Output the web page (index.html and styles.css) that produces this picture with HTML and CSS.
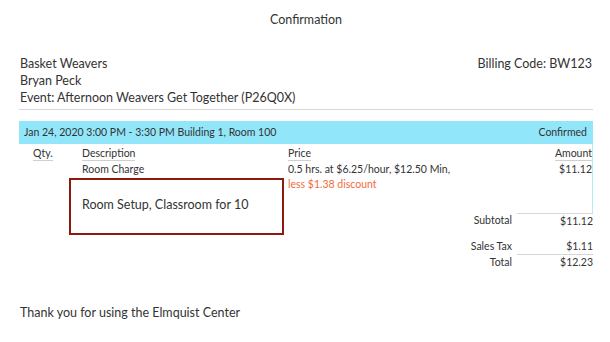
FILE: index.html
```html
<!DOCTYPE html>
<html lang="en">
<head>
    <meta charset="UTF-8">
    <meta name="viewport" content="width=device-width, initial-scale=1.0">
    <title>Confirmation</title>
    <link rel="stylesheet" href="styles.css">
</head>
<body>

<div class="page">
    <h1 class="title">Confirmation</h1>

    <div class="customer">
        <div class="customer-info">
            <div>Basket Weavers</div>
            <div>Bryan Peck</div>
            <div>Event: Afternoon Weavers Get Together (P26Q0X)</div>
        </div>
        <div class="billing">Billing Code: BW123</div>
    </div>

    <div class="booking-bar">
        <span>Jan 24, 2020 3:00 PM - 3:30 PM Building 1, Room 100</span>
        <span>Confirmed</span>
    </div>

    <div class="items">
        <div class="item-row head">
            <div class="col-qty"><span class="head-label">Qty.</span></div>
            <div><span class="head-label">Description</span></div>
            <div><span class="head-label">Price</span></div>
            <div class="col-amount"><span class="head-label">Amount</span></div>
        </div>
        <div class="item-row">
            <div class="col-qty"></div>
            <div>Room Charge</div>
            <div>
                0.5 hrs. at $6.25/hour, $12.50 Min,
                <div class="discount">less $1.38 discount</div>
            </div>
            <div class="col-amount">$11.12</div>
        </div>

        <!-- setup note for the room -->
        <div class="setup-note">Room Setup, Classroom for 10</div>
    </div>

    <div class="totals">
        <div class="total-label">Subtotal</div>
        <div class="total-value subtotal">$11.12</div>
        <div class="total-label tax">Sales Tax</div>
        <div class="total-value tax tax-value">$1.11</div>
        <div class="total-label">Total</div>
        <div class="total-value">$12.23</div>
    </div>

    <p class="thanks">Thank you for using the Elmquist Center</p>
</div>

</body>
</html>
```

FILE: styles.css
```css
body {
    margin: 0;
    font-family: Lato, "Open Sans", sans-serif;
    color: #333;
}
.page {
    padding: 0 17px 0 19px;
}
.title {
    margin: 0;
    padding-top: 11px;
    font-size: 12.5px;
    font-weight: normal;
    line-height: 17px;
    text-align: center;
}
.customer {
    display: flex;
    justify-content: space-between;
    margin-top: 27px;
    padding: 0 1px 3px 1px;
    font-size: 12.5px;
    line-height: 17px;
    border-bottom: 1px solid #d6d6d6;
}
.booking-bar {
    display: flex;
    justify-content: space-between;
    margin-top: 11px;
    height: 23px;
    padding: 0 6px 0 5px;
    background-color: #91e6f9;
    font-size: 10.5px;
    line-height: 23px;
}
.items {
    position: relative;
    height: 69px;
    border-right: 1px solid #b3ecf8;
    font-size: 10.5px;
    line-height: 15px;
}
.item-row {
    display: grid;
    grid-template-columns: 63px 206px 1fr 75px;
}
.item-row.head {
    padding-top: 2px;
    line-height: 14px;
    margin-bottom: 1px;
}
.col-qty {
    padding-left: 14px;
}
.col-amount {
    text-align: right;
}
.head-label {
    display: inline-block;
    border-bottom: 1px solid #cfcfcf;
}
.discount {
    color: #f26c3c;
}
.setup-note {
    position: absolute;
    left: 50px;
    top: 34px;
    width: 200px;
    height: 37px;
    padding: 16px 0 0 11px;
    border: 2px solid #8c1a0f;
    font-size: 12.5px;
    line-height: 17px;
}
.totals {
    display: grid;
    grid-template-columns: 1fr 76px;
    font-size: 10.5px;
    line-height: 15px;
}
.total-label {
    text-align: right;
    padding-right: 5px;
}
.total-value {
    text-align: right;
}
.subtotal {
    border-top: 1px solid #d6d6d6;
}
.tax {
    margin-top: 10px;
}
.tax-value {
    border-bottom: 1px solid #d6d6d6;
}
.thanks {
    margin: 34px 0 0 1px;
    font-size: 12.5px;
    line-height: 17px;
}
```
